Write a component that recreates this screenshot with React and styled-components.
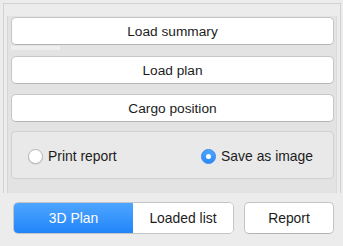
import React from "react";
import styled, { createGlobalStyle } from "styled-components";

const Global = createGlobalStyle`
  html, body { margin: 0; padding: 0; background: #ececec; }
  body { font-family: "Liberation Sans", Arial, sans-serif; }
`;

const Page = styled.div`
  width: 343px;
  height: 246px;
  box-sizing: border-box;
  padding: 3px 2px 0 3px;
  display: flex;
  flex-direction: column;
`;

const Panel = styled.div`
  height: 190px;
  box-sizing: border-box;
  border: 1px solid #d2d2d2;
  border-bottom: none;
  background: #ececec;
  padding: 12px 3px 0 3px;
  display: flex;
`;

const ScrollArea = styled.div`
  flex: 1;
  background: #e3e3e3;
  border-left: 1px solid #d6d6d6;
  border-right: 1px solid #dadada;
  padding: 1px 2px 0 3px;
  display: flex;
  flex-direction: column;
`;

const ActionButton = styled.button`
  height: 28px;
  margin-top: ${(p) => p.$gap || 0}px;
  box-sizing: border-box;
  background: #ffffff;
  border: 1px solid #c6c6c6;
  border-bottom-color: #b4b4b4;
  border-radius: 5px;
  font-family: "Liberation Sans", Arial, sans-serif;
  font-size: 13.7px;
  color: #1c1c1c;
  padding: 0;
`;

const ScrollHint = styled.div`
  width: 49px;
  height: 4px;
  margin-top: 1px;
  background: #eeeeee;
`;

const RadioBox = styled.div`
  margin-top: 9px;
  height: 48px;
  box-sizing: border-box;
  border: 1px solid #d0d0d0;
  border-radius: 4px;
  background: #e9e9e9;
  display: flex;
  align-items: center;
  justify-content: space-between;
  padding: 2px 20px 0 16px;
`;

const RadioLabel = styled.label`
  display: flex;
  align-items: center;
  gap: 5px;
  font-size: 13.9px;
  color: #1c1c1c;
`;

const RadioDot = styled.span`
  width: 15px;
  height: 15px;
  box-sizing: border-box;
  border-radius: 50%;
  display: flex;
  align-items: center;
  justify-content: center;
  background: ${(p) => (p.$on ? "linear-gradient(#4fa6ff, #2b8af8)" : "#ffffff")};
  border: 1px solid ${(p) => (p.$on ? "#2f86ef" : "#b8b8b8")};
  box-shadow: ${(p) => (p.$on ? "none" : "0 0.5px 1px rgba(0,0,0,0.15)")};
  &::after {
    content: "";
    display: ${(p) => (p.$on ? "block" : "none")};
    width: 5px;
    height: 5px;
    border-radius: 50%;
    background: #ffffff;
  }
`;

const BottomRow = styled.div`
  display: flex;
  align-items: center;
  padding: 9px 0 0 10px;
  gap: 10px;
`;

const Segmented = styled.div`
  display: flex;
  height: 32px;
  border-radius: 5px;
  overflow: hidden;
  border: 1px solid #c4c4c4;
  box-sizing: border-box;
  background: #ffffff;
`;

const Segment = styled.button`
  width: ${(p) => p.$w}px;
  height: 100%;
  border: none;
  padding: 0;
  font-family: "Liberation Sans", Arial, sans-serif;
  font-size: 13.9px;
  color: ${(p) => (p.$active ? "#ffffff" : "#1c1c1c")};
  background: ${(p) => (p.$active ? "linear-gradient(#4ea5ff, #2185f9)" : "#ffffff")};
`;

const PlainButton = styled.button`
  width: 90px;
  height: 32px;
  box-sizing: border-box;
  background: #ffffff;
  border: 1px solid #c4c4c4;
  border-bottom-color: #b2b2b2;
  border-radius: 5px;
  font-family: "Liberation Sans", Arial, sans-serif;
  font-size: 13.9px;
  color: #1c1c1c;
  padding: 0;
`;

export default function App() {
  return (
    <>
      <Global />
      <Page>
        <Panel>
          <ScrollArea>
            <ActionButton>Load summary</ActionButton>
            <ScrollHint />
            <ActionButton $gap={6}>Load plan</ActionButton>
            <ActionButton $gap={10}>Cargo position</ActionButton>
            <RadioBox>
              <RadioLabel>
                <RadioDot />
                Print report
              </RadioLabel>
              <RadioLabel>
                <RadioDot $on />
                Save as image
              </RadioLabel>
            </RadioBox>
          </ScrollArea>
        </Panel>
        <BottomRow>
          <Segmented>
            <Segment $w={119} $active>3D Plan</Segment>
            <Segment $w={100}>Loaded list</Segment>
          </Segmented>
          <PlainButton>Report</PlainButton>
        </BottomRow>
      </Page>
    </>
  );
}
